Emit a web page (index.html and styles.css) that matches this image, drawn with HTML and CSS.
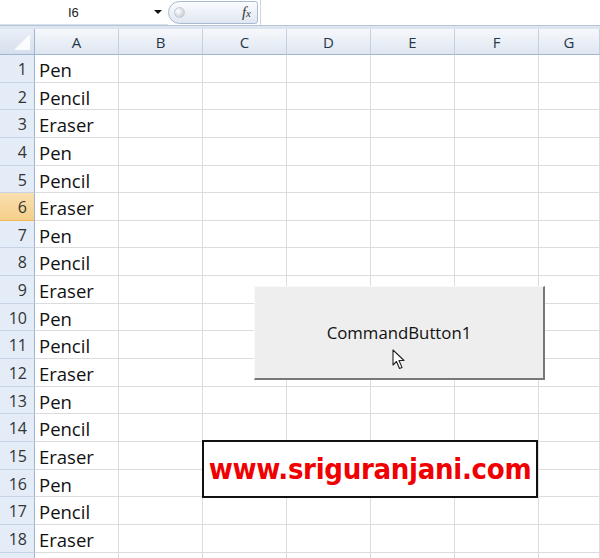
FILE: index.html
```html
<!DOCTYPE html>
<html lang="en">
<head>
  <meta charset="UTF-8">
  <title>Book1 - Excel</title>
  <link rel="stylesheet" href="styles.css">
</head>
<body>

  <div class="formula-bar">
    <div class="name-box">
      <span class="cell-ref">I6</span>
      <span class="drop-arrow"></span>
    </div>
    <div class="fx-pill">
      <span class="pill-knob"></span>
      <span class="fx"><i>f</i><i class="x">x</i></span>
    </div>
    <div class="formula-input"></div>
  </div>

  <div class="sheet">
    <div class="row head">
      <div class="corner"><span class="tri"></span></div>
      <div class="col-h">A</div><div class="col-h">B</div><div class="col-h">C</div>
      <div class="col-h">D</div><div class="col-h">E</div><div class="col-h">F</div>
      <div class="col-h last">G</div>
    </div>

    <div class="row"><div class="row-h">1</div><div class="cell">Pen</div><div class="cell"></div><div class="cell"></div><div class="cell"></div><div class="cell"></div><div class="cell"></div><div class="cell last"></div></div>
    <div class="row"><div class="row-h">2</div><div class="cell">Pencil</div><div class="cell"></div><div class="cell"></div><div class="cell"></div><div class="cell"></div><div class="cell"></div><div class="cell last"></div></div>
    <div class="row"><div class="row-h">3</div><div class="cell">Eraser</div><div class="cell"></div><div class="cell"></div><div class="cell"></div><div class="cell"></div><div class="cell"></div><div class="cell last"></div></div>
    <div class="row"><div class="row-h">4</div><div class="cell">Pen</div><div class="cell"></div><div class="cell"></div><div class="cell"></div><div class="cell"></div><div class="cell"></div><div class="cell last"></div></div>
    <div class="row"><div class="row-h">5</div><div class="cell">Pencil</div><div class="cell"></div><div class="cell"></div><div class="cell"></div><div class="cell"></div><div class="cell"></div><div class="cell last"></div></div>
    <div class="row"><div class="row-h active">6</div><div class="cell">Eraser</div><div class="cell"></div><div class="cell"></div><div class="cell"></div><div class="cell"></div><div class="cell"></div><div class="cell last"></div></div>
    <div class="row"><div class="row-h">7</div><div class="cell">Pen</div><div class="cell"></div><div class="cell"></div><div class="cell"></div><div class="cell"></div><div class="cell"></div><div class="cell last"></div></div>
    <div class="row"><div class="row-h">8</div><div class="cell">Pencil</div><div class="cell"></div><div class="cell"></div><div class="cell"></div><div class="cell"></div><div class="cell"></div><div class="cell last"></div></div>
    <div class="row"><div class="row-h">9</div><div class="cell">Eraser</div><div class="cell"></div><div class="cell"></div><div class="cell"></div><div class="cell"></div><div class="cell"></div><div class="cell last"></div></div>
    <div class="row"><div class="row-h">10</div><div class="cell">Pen</div><div class="cell"></div><div class="cell"></div><div class="cell"></div><div class="cell"></div><div class="cell"></div><div class="cell last"></div></div>
    <div class="row"><div class="row-h">11</div><div class="cell">Pencil</div><div class="cell"></div><div class="cell"></div><div class="cell"></div><div class="cell"></div><div class="cell"></div><div class="cell last"></div></div>
    <div class="row"><div class="row-h">12</div><div class="cell">Eraser</div><div class="cell"></div><div class="cell"></div><div class="cell"></div><div class="cell"></div><div class="cell"></div><div class="cell last"></div></div>
    <div class="row"><div class="row-h">13</div><div class="cell">Pen</div><div class="cell"></div><div class="cell"></div><div class="cell"></div><div class="cell"></div><div class="cell"></div><div class="cell last"></div></div>
    <div class="row"><div class="row-h">14</div><div class="cell">Pencil</div><div class="cell"></div><div class="cell"></div><div class="cell"></div><div class="cell"></div><div class="cell"></div><div class="cell last"></div></div>
    <div class="row"><div class="row-h">15</div><div class="cell">Eraser</div><div class="cell"></div><div class="cell"></div><div class="cell"></div><div class="cell"></div><div class="cell"></div><div class="cell last"></div></div>
    <div class="row"><div class="row-h">16</div><div class="cell">Pen</div><div class="cell"></div><div class="cell"></div><div class="cell"></div><div class="cell"></div><div class="cell"></div><div class="cell last"></div></div>
    <div class="row"><div class="row-h">17</div><div class="cell">Pencil</div><div class="cell"></div><div class="cell"></div><div class="cell"></div><div class="cell"></div><div class="cell"></div><div class="cell last"></div></div>
    <div class="row"><div class="row-h">18</div><div class="cell">Eraser</div><div class="cell"></div><div class="cell"></div><div class="cell"></div><div class="cell"></div><div class="cell"></div><div class="cell last"></div></div>
    <div class="row"><div class="row-h"></div><div class="cell"></div><div class="cell"></div><div class="cell"></div><div class="cell"></div><div class="cell"></div><div class="cell"></div><div class="cell last"></div></div>

    <!-- ActiveX button floating over the grid -->
    <div class="cmd-button">
      <span>CommandButton1</span>
      <svg class="cursor" width="14" height="22" viewBox="0 0 14 22">
        <path d="M1 1 L1 16 L4.5 12.5 L7.5 19.5 L10 18.4 L7 11.5 L12 11.5 Z" fill="#fff" stroke="#222" stroke-width="1.1" stroke-linejoin="round"/>
      </svg>
    </div>

    <!-- website banner -->
    <div class="banner">www.sriguranjani.com</div>
  </div>

</body>
</html>
```

FILE: styles.css
```css
body {
  margin: 0;
  width: 600px;
  height: 558px;
  overflow: hidden;
  background: #fff;
  font-family: 'Open Sans', sans-serif;
  color: #222;
}

/* formula bar */
.formula-bar {
  display: flex;
  height: 25px;
  background: #fff;
  border-bottom: 1px solid #b7c7d9;
}

.name-box {
  width: 168px;
  display: flex;
  align-items: center;
  box-sizing: border-box;
  border-bottom: 1px solid #d6e0ea;
}

.cell-ref {
  margin-left: 68px;
  font-size: 13px;
  font-family: 'Liberation Sans', sans-serif;
}

.drop-arrow {
  margin-left: 75px;
  width: 0;
  height: 0;
  border-left: 4px solid transparent;
  border-right: 4px solid transparent;
  border-top: 4px solid #111;
}

.fx-pill {
  width: 90px;
  height: 23px;
  margin-top: 1px;
  display: flex;
  align-items: center;
  justify-content: space-between;
  box-sizing: border-box;
  border: 1px solid #a9b9cf;
  border-radius: 12px 3px 3px 12px;
  background: linear-gradient(#fbfcfe, #dfe7f2);
}

.pill-knob {
  width: 9px;
  height: 9px;
  margin-left: 5px;
  border-radius: 50%;
  background: radial-gradient(circle at 35% 35%, #fff, #b8c3d0);
  border: 1px solid #c4ccd6;
}

.fx {
  margin-right: 6px;
  font-family: 'Liberation Serif', serif;
  font-size: 15px;
  color: #333;
}

.fx .x {
  font-size: 11px;
}

.formula-input {
  flex: 1;
  margin-left: 2px;
  border-left: 1px solid #c9d5e3;
  background: #fff;
}

/* worksheet */
.sheet {
  position: relative;
  border-top: 3px solid #dde6f0;
}

.row {
  display: flex;
  height: 27.65px;
}

.row.head {
  height: 26px;
}

.corner {
  width: 35px;
  flex: none;
  box-sizing: border-box;
  background: linear-gradient(#e9eff7, #d5dfec);
  border-right: 1px solid #9eb5cf;
  border-bottom: 1px solid #9eb5cf;
  position: relative;
}

.corner .tri {
  position: absolute;
  right: 4px;
  bottom: 4px;
  width: 0;
  height: 0;
  border-left: 16px solid transparent;
  border-bottom: 16px solid #fff;
  opacity: 0.85;
}

.col-h {
  width: 84px;
  flex: none;
  box-sizing: border-box;
  background: linear-gradient(#f6f8fb 0%, #e8eef6 60%, #dfe6f0 100%);
  border-right: 1px solid #c3d0df;
  border-bottom: 1px solid #9eb5cf;
  text-align: center;
  line-height: 26px;
  font-size: 15px;
  color: #27374a;
}

.col-h.last {
  flex: 1;
}

.row-h {
  width: 35px;
  flex: none;
  box-sizing: border-box;
  background: #e4ecf7;
  border-right: 1px solid #9eb5cf;
  border-bottom: 1px solid #c5d3e4;
  text-align: right;
  padding-right: 7px;
  line-height: 29px;
  font-size: 16px;
  color: #333;
}

.row-h.active {
  background: linear-gradient(#f9dfae, #f5cf8a);
  border-bottom-color: #f0b95a;
}

.cell {
  width: 84px;
  flex: none;
  box-sizing: border-box;
  border-right: 1px solid #dadcdd;
  border-bottom: 1px solid #dadcdd;
  padding-left: 4px;
  line-height: 29px;
  font-size: 18.5px;
  color: #111;
}

.cell.last {
  flex: 1;
}

/* ActiveX command button */
.cmd-button {
  position: absolute;
  left: 254px;
  top: 257px;
  width: 291px;
  height: 94px;
  box-sizing: border-box;
  background: #eeeeee;
  border-top: 1px solid #f8f8f8;
  border-left: 1px solid #f8f8f8;
  border-right: 2px solid #777;
  border-bottom: 2px solid #777;
  display: flex;
  align-items: center;
  justify-content: center;
  font-size: 16.8px;
  color: #111;
}

.cursor {
  position: absolute;
  left: 137px;
  top: 62px;
}

/* banner box */
.banner {
  position: absolute;
  left: 202px;
  top: 411px;
  width: 336px;
  height: 58px;
  box-sizing: border-box;
  border: 2px solid #111;
  background: #fff;
  color: #f00000;
  font-family: 'DejaVu Sans', sans-serif;
  font-weight: bold;
  font-stretch: condensed;
  font-size: 29px;
  text-align: center;
  line-height: 54px;
  letter-spacing: -0.3px;
}
```
